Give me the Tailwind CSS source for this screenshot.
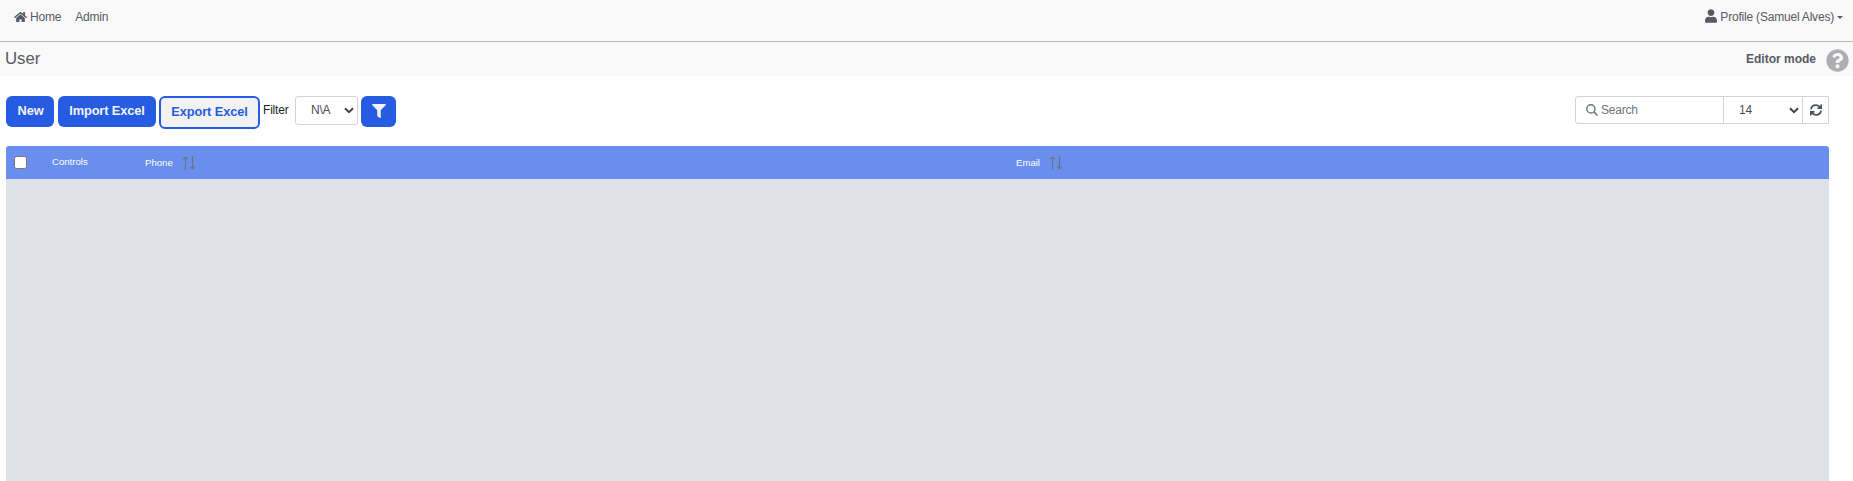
<!DOCTYPE html>
<html lang="en">
<head>
<meta charset="utf-8">
<title>User</title>
<script src="https://cdn.jsdelivr.net/npm/@tailwindcss/browser@4"></script>
</head>
<body class="h-[481px] overflow-hidden bg-white font-['Liberation_Sans',Arial,sans-serif] text-[12px] tracking-[-0.2px] text-[#555a64]">
<nav class="flex h-[42px] items-start justify-between border-b border-[#b3b4b6] bg-[#f9f9f9] pt-2 pr-[10px] pl-[14px] leading-[18px]">
  <div class="flex">
    <a class="flex items-center whitespace-nowrap"><svg class="mr-[3px] h-[12px] w-[13px]" viewBox="0 0 576 512" fill="currentColor"><path d="M280.37 148.26L96 300.11V464a16 16 0 0 0 16 16l112.06-.29a16 16 0 0 0 15.92-16V368a16 16 0 0 1 16-16h64a16 16 0 0 1 16 16v95.64a16 16 0 0 0 16 16.05L464 480a16 16 0 0 0 16-16V300L295.67 148.26a12.19 12.19 0 0 0-15.3 0zM571.6 251.47L488 182.56V44.05a12 12 0 0 0-12-12h-56a12 12 0 0 0-12 12v72.61L318.47 43a48 48 0 0 0-61 0L4.34 251.47a12 12 0 0 0-1.6 16.9l25.5 31A12 12 0 0 0 45.15 301l235.22-193.74a12.19 12.19 0 0 1 15.3 0L530.9 301a12 12 0 0 0 16.9-1.6l25.5-31a12 12 0 0 0-1.7-16.93z"/></svg>Home</a>
    <a class="ml-[14px]">Admin</a>
  </div>
  <a class="flex items-center whitespace-nowrap"><svg class="mr-[3px] mb-[2px] h-[14px] w-[12px]" viewBox="0 0 448 512" fill="currentColor"><path d="M224 256c70.700 0 128-57.300 128-128S294.700 0 224 0 96 57.300 96 128s57.300 128 128 128zm89.600 32h-16.700c-22.200 10.200-46.900 16-72.900 16s-50.600-5.800-72.900-16h-16.700C60.200 288 0 348.200 0 422.400V464c0 26.500 21.500 48 48 48h352c26.500 0 48-21.500 48-48v-41.600c0-74.200-60.200-134.400-134.400-134.400z"/></svg>Profile (Samuel Alves)<span class="ml-[3px] border-x-[3px] border-t-[3px] border-x-transparent border-t-[#555a64]"></span></a>
</nav>
<header class="flex h-[34px] items-start justify-between bg-[#f9f9f9] pr-[4px] pl-[5px]">
  <h1 class="pt-[5px] text-[16.8px] leading-[24px] tracking-normal">User</h1>
  <div class="flex items-start">
    <span class="pt-[8px] text-[12px] leading-[18px] font-bold tracking-normal">Editor mode</span>
    <svg class="mt-[7px] ml-[10px] size-[23px] text-[#adaeb2]" viewBox="0 0 512 512" fill="currentColor"><path d="M504 256c0 136.997-111.043 248-248 248S8 392.997 8 256C8 119.083 119.043 8 256 8s248 111.083 248 248zM262.655 90c-54.497 0-89.255 22.957-116.549 63.758-3.536 5.286-2.353 12.415 2.715 16.258l34.699 26.310c5.205 3.947 12.621 3.008 16.665-2.122 17.864-22.658 30.113-35.797 57.303-35.797 20.429 0 45.698 13.148 45.698 32.958 0 14.976-12.363 22.667-32.534 33.976C247.128 238.528 216 254.941 216 296v4c0 6.627 5.373 12 12 12h56c6.627 0 12-5.373 12-12v-1.333c0-28.462 83.186-29.647 83.186-106.667 0-58.002-60.165-102-116.531-102zM256 338c-25.365 0-46 20.635-46 46 0 25.364 20.635 46 46 46s46-20.636 46-46c0-25.365-20.635-46-46-46z"/></svg>
  </div>
</header>
<main class="pt-5 pr-6 pl-1.5">
  <div class="flex h-[50px] items-start justify-between">
    <div class="flex items-start text-[12.8px] font-bold whitespace-nowrap">
      <button class="h-[31px] w-[48px] rounded-[6px] bg-[#265ce2] pb-[2px] pl-[1px] tracking-[-0.1px] text-[#f3f3f5]">New</button>
      <button class="ml-1 h-[31px] w-[98px] rounded-[6px] bg-[#265ce2] pb-[2px] tracking-[-0.1px] text-[#f3f3f5]">Import Excel</button>
      <button class="ml-[3px] h-[33px] w-[101px] rounded-[6px] border-2 border-[#265ce2] bg-[#f2f2f2] pb-[2px] tracking-[-0.1px] text-[#265ce2]">Export Excel</button>
      <span class="ml-[3px] w-[32px] pt-[5px] text-[12px] leading-[18px] font-normal text-[#212529]">Filter</span>
      <div class="flex h-[29px] w-[63px] items-center justify-between rounded-[3px] border border-[#ced4da] bg-white pr-[3px] pb-[1px] pl-[15px] text-[12px] font-normal text-[#495057]">N\A<svg class="mt-[1px] h-[7px] w-[10px] text-[#40444a]" viewBox="0 0 10 7" fill="none" stroke="currentColor" stroke-width="2"><path d="M1 1.200l4 4 4-4"/></svg></div>
      <button class="ml-[3px] flex h-[31px] w-[35px] items-center justify-center rounded-[6px] bg-[#265ce2] pb-[2px] pl-[1px] text-[#f3f3f5]"><svg class="h-[14px] w-[14px]" viewBox="0 0 512 512" fill="currentColor"><path d="M487.976 0H24.028C2.710 0-8.047 25.866 7.058 40.971L192 225.941V432c0 7.831 3.821 15.170 10.237 19.662l80 55.980C298.020 518.690 320 507.493 320 487.980V225.941l184.947-184.970C520.021 25.896 509.338 0 487.976 0z"/></svg></button>
    </div>
    <div class="flex h-[28px] w-[254px] rounded-l-[3px] border border-[#ced4da] text-[#495057]">
      <div class="flex w-[148px] items-center border-r border-[#ced4da] pl-[10px] text-[#6c757d]"><svg class="mr-[3px] mb-[1px] size-[12px]" viewBox="0 0 12 12" fill="none" stroke="currentColor" stroke-width="1.500"><circle cx="4.900" cy="4.900" r="4.100"/><path d="M7.900 7.900l3.600 3.600"/></svg>Search</div>
      <div class="flex w-[79px] items-center justify-between border-r border-[#ced4da] pr-[3px] pl-[15px]">14<svg class="mt-[1px] h-[7px] w-[10px] text-[#40444a]" viewBox="0 0 10 7" fill="none" stroke="currentColor" stroke-width="2"><path d="M1 1.200l4 4 4-4"/></svg></div>
      <div class="flex flex-1 items-center justify-center"><svg class="size-[12px]" viewBox="0 0 12 12" fill="none" stroke="currentColor" stroke-width="1.700"><path d="M1 5.400C1.300 2.800 3.400 1.200 6 1.200c1.900 0 3.400.8 4.300 2.200M11.200.5v3.700H7.500M11 6.600c-.3 2.600-2.400 4.200-5 4.200-1.900 0-3.400-.8-4.300-2.200M.8 11.500V7.800h3.700"/></svg></div>
    </div>
  </div>
  <div class="flex h-[33px] items-center rounded-t-[3px] bg-[#698eee] pl-[8px] text-[9.600px] tracking-normal text-white">
    <span class="size-[13px] rounded-[2.500px] border border-[#767676] bg-white"></span>
    <span class="ml-[25px] w-[93px]">Controls</span>
    <div class="flex w-[871px] items-center pt-[1px]">Phone<svg class="ml-[9px] h-[14px] w-[14px] text-[#6c757d]" viewBox="0 0 14 14" fill="none" stroke="currentColor" stroke-width="1.200"><path d="M3.500 14V1M1.200 3.300L3.500 1l2.300 2.300M10.500 0v13M8.200 10.700l2.300 2.300 2.300-2.300"/></svg></div>
    <div class="flex items-center pt-[1px]">Email<svg class="ml-[9px] h-[14px] w-[14px] text-[#6c757d]" viewBox="0 0 14 14" fill="none" stroke="currentColor" stroke-width="1.200"><path d="M3.500 14V1M1.200 3.300L3.500 1l2.300 2.300M10.500 0v13M8.200 10.700l2.300 2.300 2.300-2.300"/></svg></div>
  </div>
  <div class="h-[302px] bg-[#dee1e6]"></div>
</main>
</body>
</html>
